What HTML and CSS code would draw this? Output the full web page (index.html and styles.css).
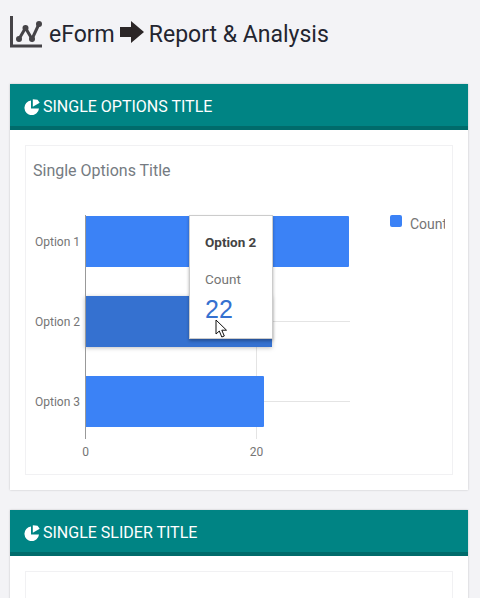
FILE: index.html
```html
<!DOCTYPE html>
<html lang="en">
<head>
    <meta charset="UTF-8">
    <meta name="viewport" content="width=device-width, initial-scale=1.0">
    <title>eForm Report &amp; Analysis</title>
    <link rel="stylesheet" href="styles.css">
</head>
<body>
    <h1 class="page-title">
        <svg class="title-icon" viewBox="0 0 32 32" width="32" height="32">
            <path d="M1.500 0V30H32" fill="none" stroke="#454347" stroke-width="3"/>
            <path d="M9 23L15.500 12L22 23L29 8" fill="none" stroke="#454347" stroke-width="3"/>
            <circle cx="9" cy="23" r="3" fill="#454347"/>
            <circle cx="15.500" cy="12" r="3" fill="#454347"/>
            <circle cx="22" cy="23" r="3" fill="#454347"/>
            <circle cx="29" cy="8" r="3" fill="#454347"/>
        </svg>
        <span>eForm</span>
        <svg class="title-arrow" viewBox="0 0 24 24" width="24" height="24">
            <path d="M0 7H11V1L24 12L11 23V17H0Z" fill="#2b2627"/>
        </svg>
        <span>Report &amp; Analysis</span>
    </h1>

    <div class="panel">
        <div class="panel-header">
            <svg class="pie-icon" viewBox="0 0 16 16" width="16" height="16">
                <path d="M7 1.600A7.300 7.300 0 1 0 15 9.600H7Z" fill="#fff"/>
                <path d="M8.800 0.300L13.500 0.800L15.700 3.800L8.800 7.800Z" fill="#fff"/>
            </svg>
            <span>Single Options Title</span>
        </div>
        <div class="panel-body">
            <div class="chart-box">
                <div class="chart-title">Single Options Title</div>
                <div class="chart">
                    <svg class="chart-svg" viewBox="26 190 419 280" width="419" height="280">
                        <line x1="256.500" y1="215" x2="256.500" y2="439" stroke="#e4e4e4"/>
                        <line x1="85" y1="321.500" x2="350" y2="321.500" stroke="#e4e4e4"/>
                        <line x1="85" y1="401.500" x2="350" y2="401.500" stroke="#e4e4e4"/>
                        <rect x="85" y="216" width="264" height="51" rx="1" fill="#3b82f6"/>
                        <rect class="bar-active" x="85" y="296" width="187" height="51" fill="#3571d0"/>
                        <rect x="85" y="376" width="179" height="51" rx="1" fill="#3b82f6"/>
                        <line x1="85.500" y1="215" x2="85.500" y2="439" stroke="#999"/>
                        <text class="axis-label" x="35" y="246">Option 1</text>
                        <text class="axis-label" x="35" y="326">Option 2</text>
                        <text class="axis-label" x="35" y="406">Option 3</text>
                        <text class="axis-label" x="85.500" y="456" text-anchor="middle">0</text>
                        <text class="axis-label" x="256.500" y="456" text-anchor="middle">20</text>
                        <rect x="390" y="215" width="12" height="12" rx="2" fill="#3b82f6"/>
                        <text class="legend-label" x="410" y="229">Count</text>
                    </svg>
                    <div class="chart-tooltip">
                        <div class="tooltip-name">Option 2</div>
                        <div class="tooltip-series">Count</div>
                        <div class="tooltip-value">22</div>
                    </div>
                    <svg class="cursor" viewBox="0 0 14 20" width="14" height="20">
                        <path d="M1 1V15L4.300 12L6.800 18L9.300 17L6.800 11.200H11.500Z" fill="#fff" stroke="#111" stroke-width="1"/>
                    </svg>
                </div>
            </div>
        </div>
    </div>

    <div class="panel">
        <div class="panel-header">
            <svg class="pie-icon" viewBox="0 0 16 16" width="16" height="16">
                <path d="M7 1.600A7.300 7.300 0 1 0 15 9.600H7Z" fill="#fff"/>
                <path d="M8.800 0.300L13.500 0.800L15.700 3.800L8.800 7.800Z" fill="#fff"/>
            </svg>
            <span>Single Slider Title</span>
        </div>
        <div class="panel-body">
            <div class="chart-box chart-box-empty"></div>
        </div>
    </div>
</body>
</html>
```

FILE: styles.css
```css
html {
    overflow: hidden;
}
body {
    font-family: Roboto, Arial, sans-serif;
    margin: 0;
    padding: 16px 12px 0 10px;
    background-color: #f3f3f6;
    color: #212529;
}
.page-title {
    display: flex;
    align-items: center;
    height: 32px;
    margin: 0 0 36px;
    font-size: 23px;
    font-weight: 400;
    line-height: 36px;
    color: #232530;
}
.page-title span {
    position: relative;
    top: 3px;
}
.title-icon {
    margin-right: 7px;
}
.title-arrow {
    margin: 0 5px 0 5px;
}

/* Panels */
.panel {
    background: #fff;
    margin-bottom: 20px;
    padding-bottom: 15px;
    box-shadow: 0 0 2px rgba(0, 0, 0, 0.2);
}
.panel-header {
    display: flex;
    align-items: center;
    height: 38px;
    padding: 4px 0 0 14px;
    background-color: #008484;
    border-bottom: 4px solid #006b6b;
    color: #fff;
    font-size: 16px;
    line-height: 22px;
    text-transform: uppercase;
}
.pie-icon {
    margin-right: 3px;
}
.panel-body {
    padding: 15px 15px 0;
}
.chart-box {
    height: 328px;
    border: 1px solid #f1f1f3;
}
.chart-box-empty {
    height: 200px;
}
.chart-title {
    box-sizing: border-box;
    padding: 15px 7px 0;
    height: 44px;
    font-size: 16px;
    line-height: 20px;
    color: #757b82;
}

/* Chart */
.chart {
    position: relative;
    height: 280px;
}
.chart-svg {
    display: block;
}
.bar-active {
    filter: drop-shadow(0 1px 2px rgba(0, 0, 0, 0.25));
}
.axis-label {
    font-size: 12px;
    fill: #757575;
}
.legend-label {
    font-size: 14px;
    fill: #757575;
}
.chart-tooltip {
    position: absolute;
    left: 163px;
    top: 25px;
    box-sizing: border-box;
    width: 84px;
    height: 124px;
    padding: 18px 15px 0;
    background: #fff;
    border: 1px solid #ccc;
    box-shadow: 0 2px 3px rgba(0, 0, 0, 0.3);
}
.tooltip-name {
    font-size: 13.500px;
    font-weight: 700;
    line-height: 16px;
    color: #444;
}
.tooltip-series {
    margin-top: 21px;
    font-size: 13.500px;
    line-height: 16px;
    color: #757575;
}
.tooltip-value {
    margin-top: 8px;
    font-family: "Liberation Sans", Arial, sans-serif;
    font-size: 25px;
    line-height: 28px;
    color: #3571d0;
}
.cursor {
    position: absolute;
    left: 189px;
    top: 129px;
}
```
